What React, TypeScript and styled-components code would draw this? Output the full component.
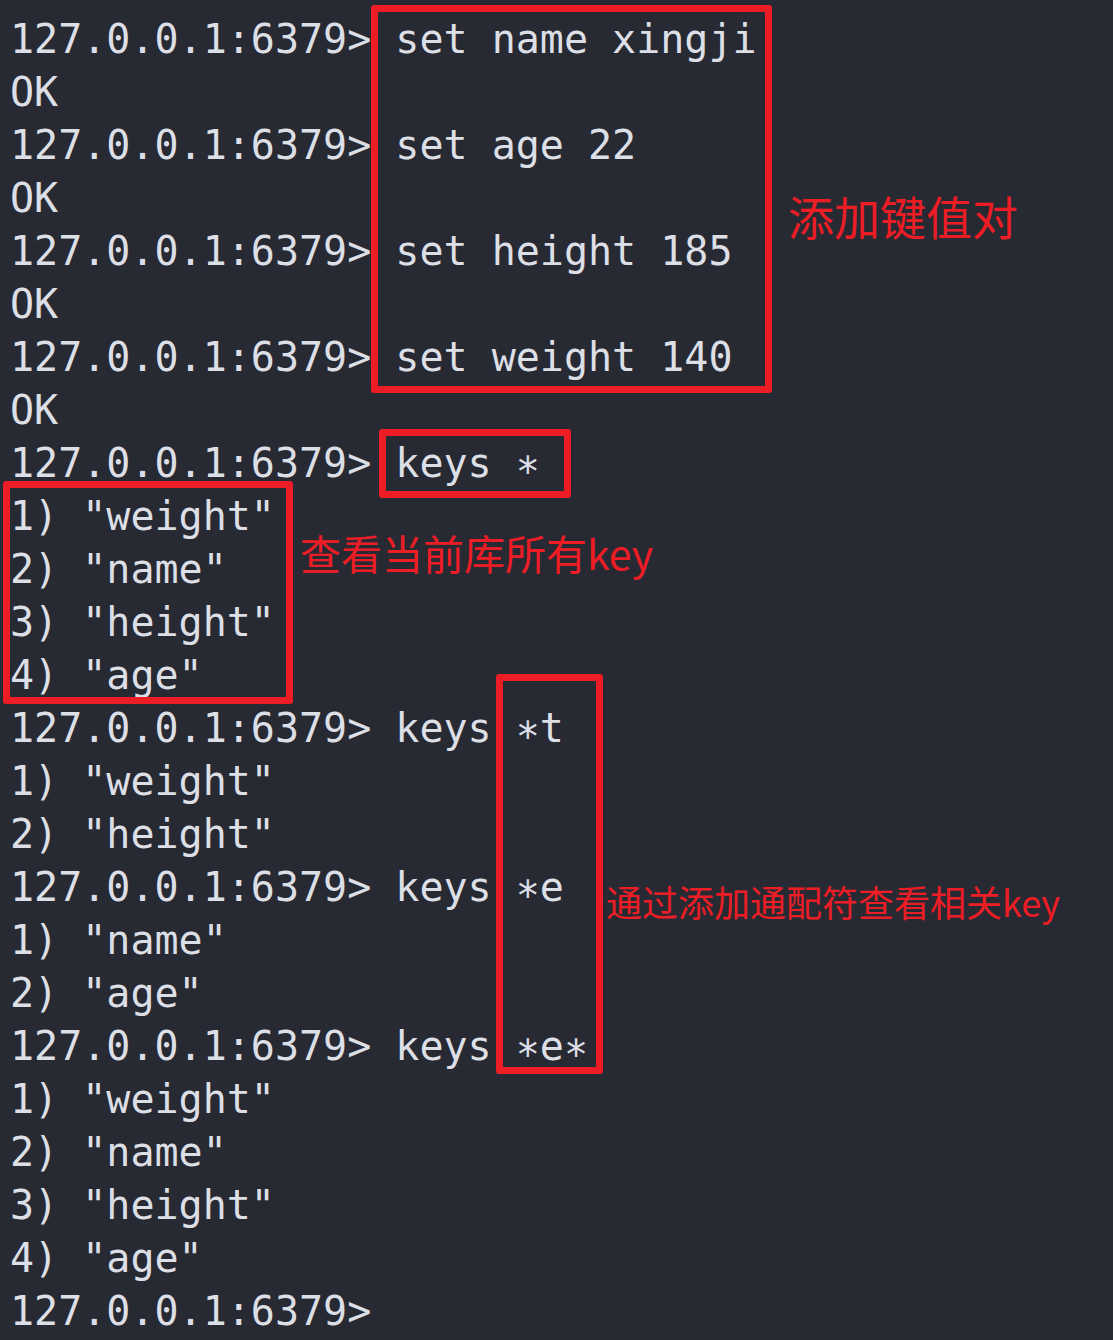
import React from "react";
import styled, { createGlobalStyle } from "styled-components";

const Global = createGlobalStyle`
  html, body {
    margin: 0;
    padding: 0;
    background: #282a33;
  }
`;

const Screen = styled.div`
  position: relative;
  width: 1113px;
  height: 1340px;
  overflow: hidden;
  background: #282a33;
  box-sizing: border-box;
  padding: 13px 0 0 10px;
`;

const Terminal = styled.pre`
  margin: 0;
  display: flex;
  flex-direction: column;
  font-family: "DejaVu Sans Mono", "Liberation Mono", monospace;
  font-size: 40px;
  line-height: 53px;
  color: #dcdfe5;
  white-space: pre;
`;

const Line = styled.div`
  height: 53px;
`;

const Star = styled.span`
  display: inline-block;
  vertical-align: -0.22em;
`;

const Box = styled.div<{ $x: number; $y: number; $w: number; $h: number }>`
  position: absolute;
  left: ${(p) => p.$x}px;
  top: ${(p) => p.$y}px;
  width: ${(p) => p.$w}px;
  height: ${(p) => p.$h}px;
  box-sizing: border-box;
  border: 7px solid #ec1d25;
  border-radius: 3px;
`;

const Note = styled.div<{ $x: number; $y: number; $size: number }>`
  position: absolute;
  left: ${(p) => p.$x}px;
  top: ${(p) => p.$y}px;
  font-family: "Noto Sans CJK SC", "Noto Sans", sans-serif;
  font-size: ${(p) => p.$size}px;
  line-height: 1;
  color: #ec1d25;
  white-space: nowrap;
`;

const P = "127.0.0.1:6379>";

const lines: string[] = [
  `${P} set name xingji`,
  "OK",
  `${P} set age 22`,
  "OK",
  `${P} set height 185`,
  "OK",
  `${P} set weight 140`,
  "OK",
  `${P} keys *`,
  `1) "weight"`,
  `2) "name"`,
  `3) "height"`,
  `4) "age"`,
  `${P} keys *t`,
  `1) "weight"`,
  `2) "height"`,
  `${P} keys *e`,
  `1) "name"`,
  `2) "age"`,
  `${P} keys *e*`,
  `1) "weight"`,
  `2) "name"`,
  `3) "height"`,
  `4) "age"`,
  `${P}`,
];

function renderLine(text: string) {
  const parts = text.split("*");
  const out: React.ReactNode[] = [];
  parts.forEach((part, i) => {
    if (i > 0) out.push(<Star key={`s${i}`}>*</Star>);
    if (part) out.push(<React.Fragment key={`t${i}`}>{part}</React.Fragment>);
  });
  return out;
}

export default function App() {
  return (
    <>
      <Global />
      <Screen>
        <Terminal>
          {lines.map((l, i) => (
            <Line key={i}>{renderLine(l)}</Line>
          ))}
        </Terminal>
        <Box $x={371} $y={5} $w={401} $h={388} />
        <Box $x={379} $y={429} $w={192} $h={69} />
        <Box $x={3} $y={481} $w={290} $h={223} />
        <Box $x={496} $y={674} $w={107} $h={400} />
        <Note $x={788} $y={192} $size={46}>添加键值对</Note>
        <Note $x={300} $y={532} $size={41}>查看当前库所有key</Note>
        <Note $x={606} $y={883} $size={36}>通过添加通配符查看相关key</Note>
      </Screen>
    </>
  );
}
